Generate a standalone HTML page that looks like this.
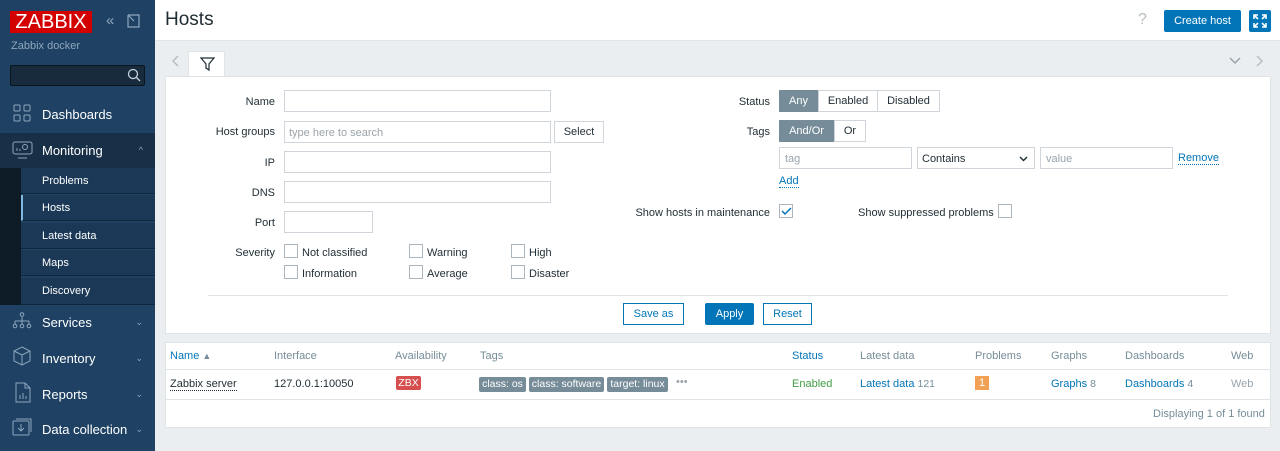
<!DOCTYPE html>
<html><head><meta charset="utf-8"><style>
*{box-sizing:border-box;margin:0;padding:0}
body{width:1280px;height:451px;overflow:hidden;background:#ebeef0;font-family:"Liberation Sans",Arial,sans-serif;font-size:11px;color:#1f2c33;position:relative}
.a{position:absolute}
#sb{left:0;top:0;width:155px;height:451px;background:#1f4264}
.mi{position:absolute;left:0;width:155px;color:#fff;font-size:13px}
.mi span{position:absolute;left:42px}
.sub{position:absolute;left:21px;width:134px;height:26px;background:#1b3957;color:#fff;font-size:11px;padding:7px 0 0 21px;border-bottom:1px solid #10263b}
.chev{position:absolute;right:12px;color:#8ea6bd;font-size:9px}
.inp{position:absolute;height:22px;border:1px solid #cfd5da;background:#fff}
.lbl{position:absolute;text-align:right}
.cb{position:absolute;width:14px;height:14px;border:1px solid #adb5bd;background:#fff}
.btn{position:absolute;height:22px;border:1px solid #cfd5da;background:#fff;text-align:center;line-height:21px}
.bb{position:absolute;height:22px;border:1px solid #0275b8;color:#0275b8;background:#fff;text-align:center;line-height:21px}
.th{position:absolute;top:350px;color:#768d99}
.td{position:absolute;top:378px}
.tag{position:absolute;top:377px;height:15px;background:#768d99;color:#fff;font-size:10.5px;text-align:center;line-height:15px;border-radius:2px}
.lnk{color:#0275b8}
.t{margin-top:1px}
</style></head><body>
<div id="sb" class="a">
 <div class="a" style="left:10px;top:11px;width:82px;height:22px;background:#d40000;color:#fff;font-size:20px;line-height:23px;text-align:center;overflow:hidden">ZABBIX</div>
 <div class="a" style="left:106px;top:12px;color:#8ea6bd;font-size:15px">«</div>
 <svg class="a" style="left:127px;top:14px" width="14" height="14"><path d="M3 1H12V13H1V4M1 1L7 7M1 1V5M1 1H5" stroke="#8ea6bd" fill="none" stroke-width="1.2"/></svg>
 <div class="a" style="left:11px;top:40px;color:#8ea6bd;font-size:11px">Zabbix docker</div>
 <div class="a" style="left:10px;top:65px;width:135px;height:21px;background:#172b3d;border:1px solid #0b1520;border-radius:2px"></div>
 <svg class="a" style="left:127px;top:68px" width="14" height="14"><circle cx="6" cy="6" r="4.5" stroke="#c7d2dc" fill="none" stroke-width="1.3"/><path d="M9.5 9.5L13 13" stroke="#c7d2dc" stroke-width="1.3"/></svg>
 <div class="mi" style="top:96px;height:36px"><svg class="a" style="left:13px;top:8px" width="18" height="18" fill="none" stroke="#8ea6bd"><rect x="1" y="1" width="6" height="6" rx="1"/><rect x="11" y="1" width="6" height="6" rx="1"/><rect x="1" y="11" width="6" height="6" rx="1"/><rect x="11" y="11" width="6" height="6" rx="1"/></svg><span style="top:11px">Dashboards</span></div>
 <div class="mi" style="top:133px;height:35px;background:#172f47"><svg class="a" style="left:12px;top:8px" width="21" height="18" fill="none" stroke="#8ea6bd"><rect x="1" y="1" width="19" height="12" rx="2"/><path d="M6 17h9M5 10V7M8 10V8"/><circle cx="13" cy="6" r="2.5"/></svg><span style="top:10px">Monitoring</span><i class="chev" style="top:12px;font-style:normal">^</i></div>
 <div class="a" style="left:0;top:168px;width:21px;height:137px;background:#0d1b26"></div>
 <div class="sub" style="top:168px">Problems</div>
 <div class="sub" style="top:195px;border-left:2px solid #7fb9e0;padding-left:19px">Hosts</div>
 <div class="sub" style="top:223px">Latest data</div>
 <div class="sub" style="top:250px">Maps</div>
 <div class="sub" style="top:278px;height:27px">Discovery</div>
 <div class="mi" style="top:305px;height:35px"><svg class="a" style="left:12px;top:7px" width="20" height="18" fill="none" stroke="#8ea6bd"><circle cx="10" cy="2.5" r="1.8"/><path d="M10 5v4M3 9h14M3 9v3M10 9v3M17 9v3"/><circle cx="3" cy="14" r="1.8"/><circle cx="10" cy="14" r="1.8"/><circle cx="17" cy="14" r="1.8"/></svg><span style="top:10px">Services</span><i class="chev" style="top:12px;font-style:normal">⌄</i></div>
 <div class="mi" style="top:340px;height:35px"><svg class="a" style="left:13px;top:6px" width="18" height="20" fill="none" stroke="#8ea6bd"><path d="M9 1L17 5V15L9 19L1 15V5ZM1 5L9 9L17 5M9 9V19"/></svg><span style="top:11px">Inventory</span><i class="chev" style="top:13px;font-style:normal">⌄</i></div>
 <div class="mi" style="top:376px;height:35px"><svg class="a" style="left:15px;top:6px" width="16" height="21" fill="none" stroke="#8ea6bd"><path d="M1 1H10L15 6V20H1ZM10 1V6H15M5 17V13M8 17V11M11 17V14"/></svg><span style="top:11px">Reports</span><i class="chev" style="top:13px;font-style:normal">⌄</i></div>
 <div class="mi" style="top:411px;height:35px"><svg class="a" style="left:12px;top:7px" width="21" height="18" fill="none" stroke="#8ea6bd"><rect x="1" y="3" width="16" height="14" rx="1"/><path d="M4 1H19V14M9 6V13M6 10L9 13L12 10"/></svg><span style="top:11px">Data collection</span><i class="chev" style="top:13px;font-style:normal">⌄</i></div>
</div>
<div class="a" style="left:155px;top:0;width:1125px;height:41px;background:#fff;border-bottom:1px solid #e0e4e7"></div>
<div class="a" style="left:165px;top:9px;font-size:19px">Hosts</div>
<div class="a" style="left:1138px;top:11px;color:#b5bec4;font-size:16px">?</div>
<div class="a" style="left:1164px;top:10px;width:77px;height:22px;background:#0275b8;border-radius:2px;color:#fff;text-align:center;line-height:23px">Create host</div>
<div class="a" style="left:1249px;top:10px;width:22px;height:22px;background:#0275b8;border-radius:2px"><svg width="22" height="22" fill="none" stroke="#fff" stroke-width="1.6"><path d="M5 9V5h4M5 5l4 4M17 9V5h-4M17 5l-4 4M5 13v4h4M5 17l4-4M17 13v4h-4M17 17l-4-4"/></svg></div>
<svg class="a" style="left:171px;top:55px" width="8" height="12" fill="none" stroke="#b5bec4" stroke-width="1.5"><path d="M7 1L2 6L7 11"/></svg>
<svg class="a" style="left:1229px;top:57px" width="12" height="8" fill="none" stroke="#98a4ad" stroke-width="1.5"><path d="M1 1L6 6L11 1"/></svg>
<svg class="a" style="left:1256px;top:55px" width="8" height="12" fill="none" stroke="#b5bec4" stroke-width="1.5"><path d="M1 1L6 6L1 11"/></svg>
<div class="a" style="left:188px;top:51px;width:37px;height:26px;background:#fff;border:1px solid #dfe4e7;border-bottom:none"><svg class="a" style="left:11px;top:5px" width="15" height="14" fill="none" stroke="#1f2c33" stroke-width="1.2"><path d="M1 1H14L9 7V13L6 11V7Z"/></svg></div>
<div class="a" style="left:165px;top:76px;width:1106px;height:258px;background:#fff;border:1px solid #dfe4e7"></div>
<div class="lbl" style="left:200px;top:96px;width:75px">Name</div>
<div class="inp" style="left:284px;top:90px;width:267px"></div>
<div class="lbl" style="left:190px;top:126px;width:85px">Host groups</div>
<div class="inp" style="left:284px;top:121px;width:267px;color:#9aa4ab;padding:5px 0 0 4px">type here to search</div>
<div class="btn" style="left:554px;top:121px;width:50px">Select</div>
<div class="lbl" style="left:200px;top:157px;width:75px">IP</div>
<div class="inp" style="left:284px;top:151px;width:267px"></div>
<div class="lbl" style="left:200px;top:187px;width:75px">DNS</div>
<div class="inp" style="left:284px;top:181px;width:267px"></div>
<div class="lbl" style="left:200px;top:217px;width:75px">Port</div>
<div class="inp" style="left:284px;top:211px;width:89px"></div>
<div class="lbl" style="left:200px;top:247px;width:75px">Severity</div>
<div class="cb" style="left:284px;top:244px"></div><div class="a" style="left:302px;top:247px">Not classified</div>
<div class="cb" style="left:284px;top:265px"></div><div class="a" style="left:302px;top:268px">Information</div>
<div class="cb" style="left:409px;top:244px"></div><div class="a" style="left:427px;top:247px">Warning</div>
<div class="cb" style="left:409px;top:265px"></div><div class="a" style="left:427px;top:268px">Average</div>
<div class="cb" style="left:511px;top:244px"></div><div class="a" style="left:529px;top:247px">High</div>
<div class="cb" style="left:511px;top:265px"></div><div class="a" style="left:529px;top:268px">Disaster</div>
<div class="lbl" style="left:690px;top:96px;width:80px">Status</div>
<div class="a" style="left:779px;top:90px;width:39px;height:22px;background:#768d99;color:#fff;text-align:center;line-height:23px">Any</div>
<div class="btn" style="left:818px;top:90px;width:60px">Enabled</div>
<div class="btn" style="left:877px;top:90px;width:63px">Disabled</div>
<div class="lbl" style="left:690px;top:126px;width:80px">Tags</div>
<div class="a" style="left:779px;top:120px;width:55px;height:22px;background:#768d99;color:#fff;text-align:center;line-height:23px">And/Or</div>
<div class="btn" style="left:834px;top:120px;width:32px">Or</div>
<div class="inp" style="left:779px;top:147px;width:133px;color:#9aa4ab;padding:5px 0 0 5px">tag</div>
<div class="inp" style="left:917px;top:147px;width:118px;padding:5px 0 0 4px">Contains<svg class="a" style="right:6px;top:8px" width="9" height="6" fill="none" stroke="#1f2c33" stroke-width="1.4"><path d="M1 1L4.5 4.5L8 1"/></svg></div>
<div class="inp" style="left:1040px;top:147px;width:133px;color:#9aa4ab;padding:5px 0 0 5px">value</div>
<div class="a lnk" style="left:1178px;top:152px;border-bottom:1px dotted #0275b8">Remove</div>
<div class="a lnk" style="left:779px;top:175px;border-bottom:1px dotted #0275b8">Add</div>
<div class="lbl" style="left:600px;top:207px;width:170px">Show hosts in maintenance</div>
<div class="cb" style="left:779px;top:204px"><svg class="a" style="left:1px;top:2px" width="11" height="9" fill="none" stroke="#0275b8" stroke-width="1.5"><path d="M1 4L4 7L10 1"/></svg></div>
<div class="a" style="left:858px;top:207px">Show suppressed problems</div>
<div class="cb" style="left:998px;top:204px"></div>
<div class="a" style="left:208px;top:295px;width:1020px;height:1px;background:#e0e4e7"></div>
<div class="bb" style="left:623px;top:303px;width:61px">Save as</div>
<div class="a" style="left:705px;top:303px;width:49px;height:22px;background:#0275b8;color:#fff;text-align:center;line-height:23px;border-radius:2px">Apply</div>
<div class="bb" style="left:763px;top:303px;width:49px">Reset</div>
<div class="a" style="left:165px;top:342px;width:1106px;height:86px;background:#fff;border:1px solid #dfe4e7"></div>
<div class="a" style="left:166px;top:369px;width:1104px;height:1px;background:#e0e4e7"></div>
<div class="a" style="left:166px;top:399px;width:1104px;height:1px;background:#e0e4e7"></div>
<div class="th lnk" style="left:170px">Name <span style="font-size:9px;color:#768d99">▲</span></div>
<div class="th" style="left:274px">Interface</div>
<div class="th" style="left:395px">Availability</div>
<div class="th" style="left:480px">Tags</div>
<div class="th lnk" style="left:792px">Status</div>
<div class="th" style="left:860px">Latest data</div>
<div class="th" style="left:975px">Problems</div>
<div class="th" style="left:1051px">Graphs</div>
<div class="th" style="left:1125px">Dashboards</div>
<div class="th" style="left:1231px">Web</div>
<div class="td" style="left:170px;border-bottom:1px dotted #1f2c33">Zabbix server</div>
<div class="td" style="left:274px">127.0.0.1:10050</div>
<div class="a" style="left:396px;top:376px;width:25px;height:14px;background:#d64e4e;color:#fff;font-size:10.5px;text-align:center;line-height:14px;border-radius:2px">ZBX</div>
<div class="tag" style="left:479px;width:47px">class: os</div>
<div class="tag" style="left:529px;width:75px">class: software</div>
<div class="tag" style="left:607px;width:61px">target: linux</div>
<div class="td" style="left:676px;color:#9aa4ab;top:376px">•••</div>
<div class="td" style="left:792px;color:#429e47">Enabled</div>
<div class="td" style="left:860px"><span class="lnk">Latest data</span> <span style="color:#768d99;font-size:10.5px">121</span></div>
<div class="a" style="left:975px;top:376px;width:14px;height:14px;background:#f1a054;color:#fff;font-size:11px;text-align:center;line-height:14px">1</div>
<div class="td" style="left:1051px"><span class="lnk">Graphs</span> <span style="color:#768d99;font-size:10.5px">8</span></div>
<div class="td" style="left:1125px"><span class="lnk">Dashboards</span> <span style="color:#768d99;font-size:10.5px">4</span></div>
<div class="td" style="left:1231px;color:#9aa4ab;font-size:11px">Web</div>
<div class="a" style="left:1153px;top:408px;color:#768d99;font-size:11px">Displaying 1 of 1 found</div>
</body></html>
